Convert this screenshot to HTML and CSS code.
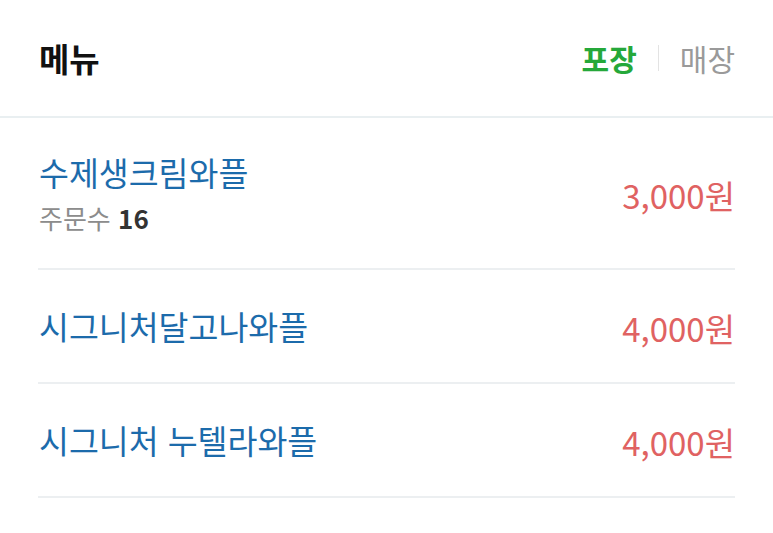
FILE: index.html
```html
<!DOCTYPE html>
<html lang="ko">
<head>
    <meta charset="UTF-8">
    <meta name="viewport" content="width=device-width, initial-scale=1.0">
    <title>메뉴</title>
    <link rel="stylesheet" href="styles.css">
</head>
<body>

<div class="menu-header">
    <h2 class="menu-title">메뉴</h2>
    <div class="order-type">
        <span class="type active">포장</span>
        <span class="type-sep"></span>
        <span class="type">매장</span>
    </div>
</div>

<ul class="menu-list">
    <li class="menu-item">
        <div class="item-info">
            <div class="item-name">수제생크림와플</div>
            <div class="item-count">주문수 <b>16</b></div>
        </div>
        <div class="item-price">3,000원</div>
    </li>
    <li class="menu-item">
        <div class="item-info">
            <div class="item-name">시그니처달고나와플</div>
        </div>
        <div class="item-price">4,000원</div>
    </li>
    <li class="menu-item">
        <div class="item-info">
            <div class="item-name">시그니처 누텔라와플</div>
        </div>
        <div class="item-price">4,000원</div>
    </li>
</ul>

</body>
</html>
```

FILE: styles.css
```css
body {
    margin: 0;
    font-family: "Noto Sans CJK KR", "Noto Sans", sans-serif;
    background-color: #fff;
}
.menu-header {
    display: flex;
    justify-content: space-between;
    align-items: center;
    height: 116px;
    padding: 0 38px 0 39px;
    border-bottom: 2px solid #e9eff1;
}
.menu-title {
    margin: 0;
    font-size: 33px;
    font-weight: bold;
    color: #111;
}
.order-type {
    display: flex;
    align-items: center;
    gap: 21px;
}
.type {
    font-size: 30px;
    color: #9a9a9a;
}
.type.active {
    font-weight: bold;
    color: #25a83a;
}
.type-sep {
    width: 1px;
    height: 26px;
    background-color: #e3e3e3;
}
.menu-list {
    list-style: none;
    margin: 0;
    padding: 0 38px;
}
.menu-item {
    display: flex;
    justify-content: space-between;
    align-items: center;
    padding: 33px 0;
    border-bottom: 2px solid #eceff1;
}
.item-info {
    display: flex;
    flex-direction: column;
    gap: 8px;
}
.item-name {
    font-size: 32.5px;
    line-height: 42px;
    color: #1c6bab;
    padding-left: 1px;
}
.item-count {
    font-size: 26px;
    line-height: 34px;
    color: #8c8c8c;
    padding-left: 1px;
}
.item-count b {
    color: #333;
}
.item-price {
    font-size: 33px;
    line-height: 42px;
    color: #e06262;
    padding-top: 4px;
}
```
